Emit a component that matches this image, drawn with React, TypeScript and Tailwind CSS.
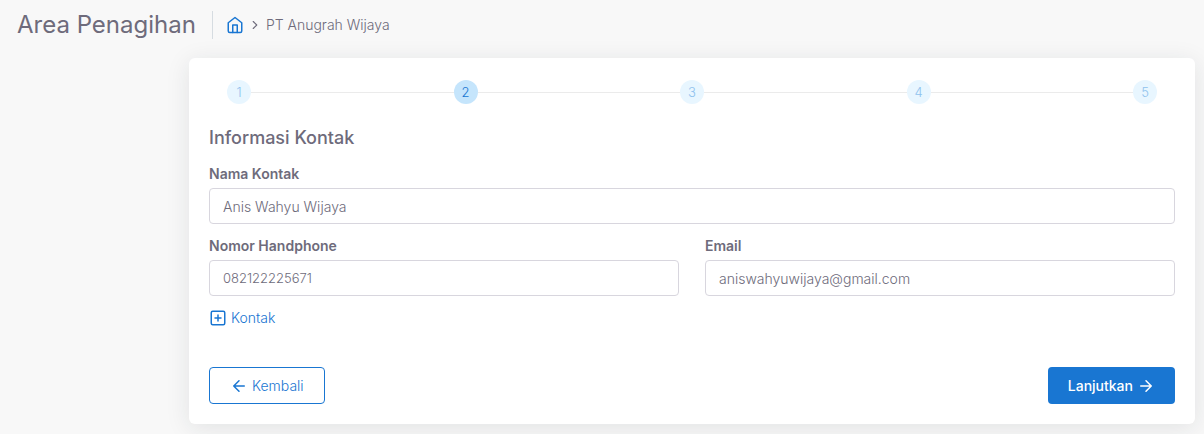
import React, { useState } from 'react';

const Icon = ({ size = 18, children }: { size?: number; children: React.ReactNode }) => (
  <svg
    width={size}
    height={size}
    viewBox="0 0 24 24"
    fill="none"
    stroke="currentColor"
    strokeWidth="2"
    strokeLinecap="round"
    strokeLinejoin="round"
    className="shrink-0"
    aria-hidden="true"
  >
    {children}
  </svg>
);

const Field = ({ id, label, type = 'text', value, onChange }) => (
  <div className="flex min-w-0 flex-1 flex-col gap-1">
    <label htmlFor={id} className="text-sm leading-5 font-semibold">
      {label}
    </label>
    <input
      id={id}
      type={type}
      value={value}
      onChange={(e) => onChange(e.target.value)}
      className={`h-9 w-full rounded border border-[#d8d6de] bg-white px-[13px] font-light outline-none focus:border-[#1976d2] ${
        type === 'tel' ? 'text-[13px]' : 'text-sm'
      }`}
    />
  </div>
);

const steps = [1, 2, 3, 4, 5];

const App = () => {
  const [current, setCurrent] = useState(2);
  const [name, setName] = useState('Anis Wahyu Wijaya');
  const [phone, setPhone] = useState('082122225671');
  const [email, setEmail] = useState('aniswahyuwijaya@gmail.com');

  return (
    <div className="min-h-screen bg-[#f8f8f8] pb-[10px] font-['Inter','Liberation_Sans',sans-serif] text-[#6e6b7b]">
      <header className="flex h-[58px] items-start pt-[11px] pl-[17px]">
        <h1 className="border-r border-[#d6dce1] pr-4 text-2xl leading-7">Area Penagihan</h1>
        <nav aria-label="Breadcrumb" className="flex h-7 items-center pl-[13px] text-sm font-light">
          <a href="#" aria-label="Beranda" className="text-[#1976d2]">
            <Icon>
              <path d="M3 9l9-7 9 7v11a2 2 0 0 1-2 2H5a2 2 0 0 1-2-2z" />
              <path d="M9 22V12h6v10" />
            </Icon>
          </a>
          <span className="px-1">
            <Icon size={14}>
              <path d="M9 18l6-6-6-6" />
            </Icon>
          </span>
          <span>PT Anugrah Wijaya</span>
        </nav>
      </header>

      <main className="mr-[9px] ml-[189px] rounded-md bg-white px-5 pt-[22px] pb-5 shadow-[0_4px_24px_0_rgba(34,41,47,0.1)]">
        <ol className="flex items-center px-[18px]">
          {steps.map((step) => (
            <li key={step} className={`flex items-center ${step > 1 ? 'flex-1' : ''}`}>
              {step > 1 && <span className="h-px flex-1 bg-[#ebebeb]" />}
              <button
                type="button"
                onClick={() => setCurrent(step)}
                className={`size-6 rounded-full text-[13px] leading-6 font-light ${
                  step === current ? 'bg-[#c5e5fc] text-[#1976d2]' : 'bg-[#e8f6ff] text-[#8fc2ee]'
                }`}
              >
                {step}
              </button>
            </li>
          ))}
        </ol>

        <form onSubmit={(e) => e.preventDefault()}>
          <h2 className="mt-[22px] mb-[14px] text-lg leading-6 font-medium">Informasi Kontak</h2>
          <Field id="name" label="Nama Kontak" value={name} onChange={setName} />
          <div className="mt-3 flex gap-[26px]">
            <Field id="phone" label="Nomor Handphone" type="tel" value={phone} onChange={setPhone} />
            <Field id="email" label="Email" type="email" value={email} onChange={setEmail} />
          </div>

          <button type="button" className="mt-3 flex items-center gap-1 text-sm leading-5 font-light text-[#1976d2]">
            <Icon>
              <rect x="3" y="3" width="18" height="18" rx="2" />
              <path d="M12 8v8M8 12h8" />
            </Icon>
            Kontak
          </button>

          <div className="mt-[39px] flex justify-between text-sm">
            <button
              type="button"
              className="flex h-[37px] items-center gap-1 rounded border border-[#1976d2] px-5 font-light text-[#1976d2]"
            >
              <Icon>
                <path d="M19 12H5M12 19l-7-7 7-7" />
              </Icon>
              Kembali
            </button>
            <button type="submit" className="flex h-[37px] items-center gap-1 rounded bg-[#1976d2] px-5 font-medium text-white">
              Lanjutkan
              <Icon>
                <path d="M5 12h14M12 5l7 7-7 7" />
              </Icon>
            </button>
          </div>
        </form>
      </main>
    </div>
  );
};

export default App;
